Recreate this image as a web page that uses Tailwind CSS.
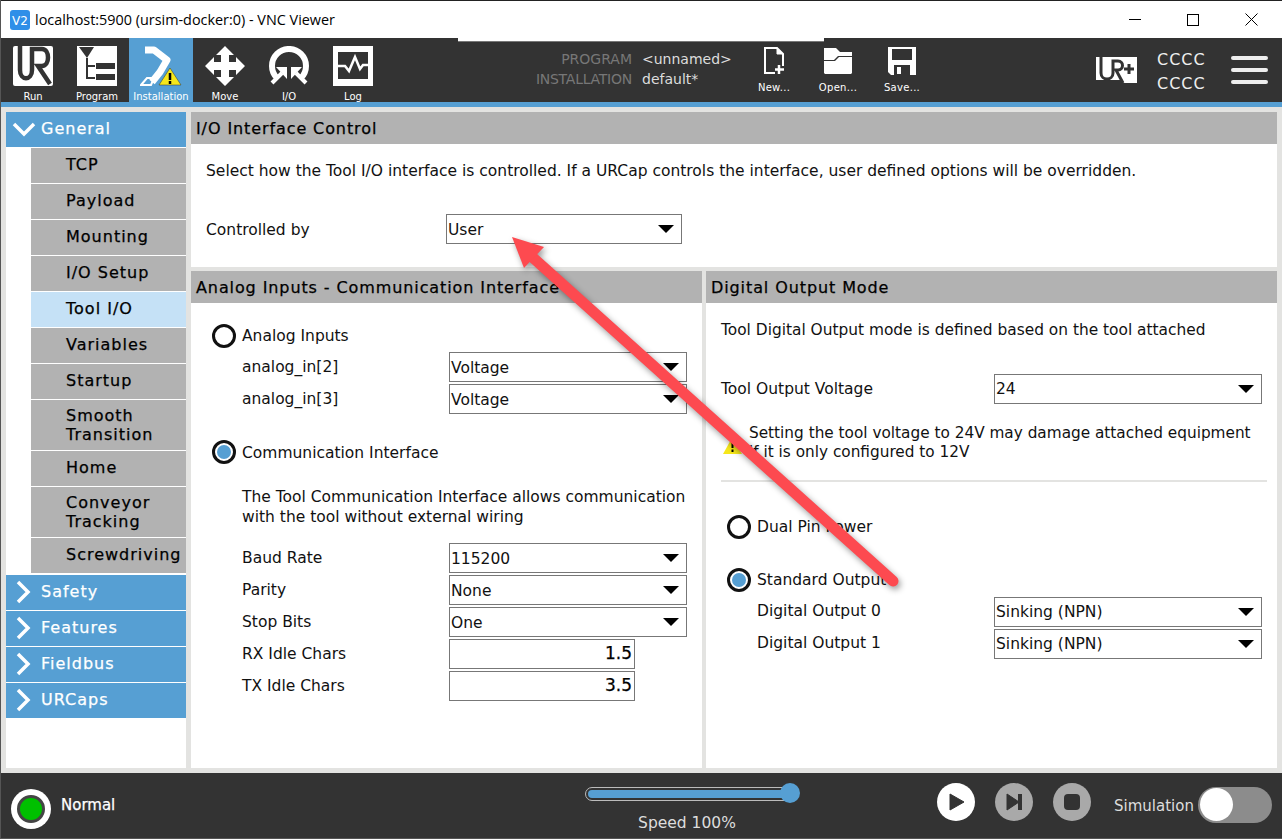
<!DOCTYPE html>
<html lang="en">

<head>
    <meta charset="UTF-8">
    <script src="https://cdn.jsdelivr.net/npm/@tailwindcss/browser@4"></script>
    <title>VNC Viewer</title>
</head>

<body class="font-['DejaVu_Sans',sans-serif] overflow-hidden">
    <div class="relative w-[1282px] h-[839px] bg-[#555] pl-px pb-px flex flex-col">

        <!-- window title -->
        <div class="h-[38px] shrink-0 bg-white border-t border-[#222] flex items-center pl-[9px] font-['Open_Sans',sans-serif] text-[14.4px] text-black relative">
            <svg class="w-[20px] h-[20px] mr-[5px]" viewBox="0 0 20 20"><rect width="20" height="20" rx="3" fill="#2f8fe8"/><text x="2" y="15" font-size="12" fill="#fff" font-family="DejaVu Sans">V2</text></svg>
            <span>localhost:5900 (ursim-docker:0) - VNC Viewer</span>
            <div class="ml-auto mr-[1px] flex items-center h-full">
                <div class="w-[58px] flex justify-center"><div class="w-[12px] h-px bg-black"></div></div>
                <div class="w-[58px] flex justify-center"><div class="w-[12px] h-[12px] border border-black"></div></div>
                <div class="w-[59px] flex justify-center">
                    <svg class="w-[13px] h-[13px]" viewBox="0 0 13 13"><path d="M0.5 0.5L12.5 12.5M12.5 0.5L0.5 12.5" stroke="#000" fill="none"/></svg>
                </div>
            </div>
            <div class="absolute left-[457px] top-[37px] w-[366px] h-[4px] bg-white border-b border-[#777]"></div>
        </div>

        <!-- toolbar -->
        <div class="h-[64px] shrink-0 bg-[#333] flex text-white">
            <div class="w-[64px] flex flex-col items-center pt-[8px]">
                <svg class="w-[40px] h-[40px] shrink-0" viewBox="0 0 40 40"><rect width="40" height="40" rx="2" fill="#fff"/><path d="M7 0V24C7 35 19 35 19 24V3H29C37 3 37 20 29 20H25L37 38" fill="none" stroke="#333" stroke-width="4.5"/></svg>
                <span class="text-[10px] mt-[3px]">Run</span>
            </div>
            <div class="w-[64px] flex flex-col items-center pt-[8px]">
                <svg class="w-[40px] h-[40px] shrink-0" viewBox="0 0 40 40"><rect width="40" height="40" fill="#fff"/><path d="M2 1H17L10 12Z" fill="#333"/><path d="M10 12V32H18M10 20H18" stroke="#333" stroke-width="2" fill="none"/><rect x="19" y="17" width="19" height="6" fill="#333"/><rect x="19" y="28" width="19" height="6" fill="#333"/></svg>
                <span class="text-[10px] mt-[3px]">Program</span>
            </div>
            <div class="w-[64px] bg-[#569fd3] flex flex-col items-center pt-[8px]">
                <svg class="w-[42px] h-[40px] shrink-0" viewBox="0 0 42 40"><path d="M5 4H14L27 14L20 26L12 36" fill="none" stroke="#fff" stroke-width="7" stroke-linejoin="round"/><path d="M1 39L7 32H14L11 39Z" fill="none" stroke="#fff" stroke-width="2"/><path d="M19 39L30 22L41 39Z" fill="#f6e71b" stroke="#333" stroke-width="0.5"/><path d="M30 27V34M30 35V38" stroke="#000" stroke-width="2.5"/></svg>
                <span class="text-[10px] mt-[3px] whitespace-nowrap">Installation</span>
            </div>
            <div class="w-[64px] flex flex-col items-center pt-[8px]">
                <svg class="w-[40px] h-[40px] shrink-0" viewBox="0 0 40 40"><path d="M20 0L29 9H24V16H31V11L40 20L31 29V24H24V31H29L20 40L11 31H16V24H9V29L0 20L9 11V16H16V9H11Z" fill="#fff"/></svg>
                <span class="text-[10px] mt-[3px]">Move</span>
            </div>
            <div class="w-[64px] flex flex-col items-center pt-[8px]">
                <svg class="w-[40px] h-[40px] shrink-0" viewBox="0 0 40 40"><path d="M8 32A17 17 0 1 1 32 32" fill="none" stroke="#fff" stroke-width="6"/><path d="M3 37L13 27" stroke="#fff" stroke-width="4"/><path d="M18 21V33L7 21Z" fill="#fff"/><path d="M37 37L27 27" stroke="#fff" stroke-width="4"/><path d="M22 21V33L33 21Z" fill="#fff"/></svg>
                <span class="text-[10px] mt-[3px]">I/O</span>
            </div>
            <div class="w-[64px] flex flex-col items-center pt-[8px]">
                <svg class="w-[40px] h-[40px] shrink-0" viewBox="0 0 40 40"><rect width="40" height="40" fill="#fff"/><rect x="5" y="6" width="30" height="27" fill="#333"/><path d="M5 20H12L16 25L22 11L27 23L30 19H35" stroke="#fff" stroke-width="2.5" fill="none"/></svg>
                <span class="text-[10px] mt-[3px]">Log</span>
            </div>

            <div class="w-[247px] flex flex-col items-end pt-[11px] text-[14px] leading-[20px] text-[#777]">
                <span>PROGRAM</span>
                <span class="tracking-[-0.25px]">INSTALLATION</span>
            </div>
            <div class="w-[110px] flex flex-col pl-[10px] pt-[11px] text-[14px] leading-[20px] text-[#ddd]">
                <span>&lt;unnamed&gt;</span>
                <span>default*</span>
            </div>
            <div class="w-[64px] flex flex-col items-center pt-[9px]">
                <svg class="w-[20px] h-[28px] shrink-0" viewBox="0 0 20 28"><path d="M1 1H13L19 7V26H1Z" fill="none" stroke="#fff" stroke-width="2"/><path d="M13 1V7H19" fill="#fff" stroke="#fff"/><rect x="11" y="19" width="9" height="9" fill="#333"/><path d="M15 18V27M11 22.5H20" stroke="#fff" stroke-width="2.5"/></svg>
                <span class="text-[10px] tracking-[0.3px] mt-[5px]">New...</span>
            </div>
            <div class="w-[64px] flex flex-col items-center pt-[9px]">
                <svg class="w-[28px] h-[28px] shrink-0" viewBox="0 0 28 28"><path d="M0 1H12L16 5H28V9H14L10 13H0Z" fill="#fff"/><path d="M0 14H11L15 10H28V26L27 27H1L0 26Z" fill="#fff"/></svg>
                <span class="text-[10px] tracking-[0.3px] mt-[5px]">Open...</span>
            </div>
            <div class="w-[64px] flex flex-col items-center pt-[9px]">
                <svg class="w-[28px] h-[28px] shrink-0" viewBox="0 0 28 28"><path d="M0 0H28V28H3L0 25Z" fill="#fff"/><rect x="4" y="2" width="20" height="11" fill="#333"/><rect x="6" y="18" width="16" height="10" fill="#333"/><rect x="9" y="20" width="4" height="7" fill="#fff"/></svg>
                <span class="text-[10px] tracking-[0.3px] mt-[5px]">Save...</span>
            </div>

            <div class="ml-auto flex">
                <svg class="w-[41px] h-[28px] mt-[18px] mr-[20px]" viewBox="0 0 41 28"><path d="M0 1H41V27H28L24 24H0Z" fill="#fff"/><path d="M5 1V17C5 25 17 25 17 17V5H22C28 5 28 14 22 14H20L27 27" fill="none" stroke="#333" stroke-width="3"/><path d="M33 8V18M28 13H38" stroke="#333" stroke-width="3"/></svg>
                <div class="w-[52px] flex flex-col pt-[10px] text-[16px] leading-[24px] text-[#eee] tracking-[1px]">
                    <span>CCCC</span>
                    <span>CCCC</span>
                </div>
                <div class="w-[37px] ml-[22px] mr-[14px] mt-[18px] flex flex-col gap-[8px]">
                    <div class="h-[4px] bg-[#eee] rounded-sm"></div>
                    <div class="h-[4px] bg-[#eee] rounded-sm"></div>
                    <div class="h-[4px] bg-[#eee] rounded-sm"></div>
                </div>
            </div>
        </div>
        <div class="h-[5px] shrink-0 bg-[#569fd3]"></div>

        <!-- main -->
        <div class="h-[666px] shrink-0 bg-[#e3e3e1] flex pl-[5px] pr-[5px] pt-[5px] pb-[5px] gap-[5px]">

            <!-- sidebar -->
            <div class="w-[180px] bg-white flex flex-col text-[16px] text-black tracking-[1px] [-webkit-text-stroke:0.25px]">
                <div class="h-[35px] bg-[#569fd3] text-white flex items-center pb-[2px] mb-px">
                    <svg class="w-[24px] h-[16px] ml-[6px] mr-[5px]" viewBox="0 0 24 16"><path d="M2 3L12 13L22 3" stroke="#fff" stroke-width="3.5" fill="none"/></svg>
                    <span>General</span>
                </div>
                <div class="pl-[25px] flex flex-col gap-px">
                    <div class="h-[35px] bg-[#b2b2b2] flex items-center pl-[35px] pb-[2px]">TCP</div>
                    <div class="h-[35px] bg-[#b2b2b2] flex items-center pl-[35px] pb-[2px]">Payload</div>
                    <div class="h-[35px] bg-[#b2b2b2] flex items-center pl-[35px] pb-[2px]">Mounting</div>
                    <div class="h-[35px] bg-[#b2b2b2] flex items-center pl-[35px] pb-[2px]">I/O Setup</div>
                    <div class="h-[35px] bg-[#c5e1f6] flex items-center pl-[35px] pb-[2px]">Tool I/O</div>
                    <div class="h-[35px] bg-[#b2b2b2] flex items-center pl-[35px] pb-[2px]">Variables</div>
                    <div class="h-[35px] bg-[#b2b2b2] flex items-center pl-[35px] pb-[2px]">Startup</div>
                    <div class="h-[50px] bg-[#b2b2b2] flex items-center pl-[35px] leading-[19px]">Smooth<br>Transition</div>
                    <div class="h-[35px] bg-[#b2b2b2] flex items-center pl-[35px] pb-[2px]">Home</div>
                    <div class="h-[50px] bg-[#b2b2b2] flex items-center pl-[35px] leading-[19px]">Conveyor<br>Tracking</div>
                    <div class="h-[35px] bg-[#b2b2b2] flex items-center pl-[35px] pb-[2px]">Screwdriving</div>
                </div>
                <div class="flex flex-col gap-px mt-[2px] text-white">
                    <div class="h-[35px] bg-[#569fd3] flex items-center pb-[2px]"><svg class="w-[16px] h-[24px] ml-[9px] mr-[10px]" viewBox="0 0 16 24"><path d="M3 2L13 12L3 22" stroke="#fff" stroke-width="3.5" fill="none"/></svg>Safety</div>
                    <div class="h-[35px] bg-[#569fd3] flex items-center pb-[2px]"><svg class="w-[16px] h-[24px] ml-[9px] mr-[10px]" viewBox="0 0 16 24"><path d="M3 2L13 12L3 22" stroke="#fff" stroke-width="3.5" fill="none"/></svg>Features</div>
                    <div class="h-[35px] bg-[#569fd3] flex items-center pb-[2px]"><svg class="w-[16px] h-[24px] ml-[9px] mr-[10px]" viewBox="0 0 16 24"><path d="M3 2L13 12L3 22" stroke="#fff" stroke-width="3.5" fill="none"/></svg>Fieldbus</div>
                    <div class="h-[35px] bg-[#569fd3] flex items-center pb-[2px]"><svg class="w-[16px] h-[24px] ml-[9px] mr-[10px]" viewBox="0 0 16 24"><path d="M3 2L13 12L3 22" stroke="#fff" stroke-width="3.5" fill="none"/></svg>URCaps</div>
                </div>
            </div>

            <!-- content -->
            <div class="flex-1 flex flex-col gap-[4px] text-[15.5px] text-[#111]">
                <div class="h-[155px] bg-white shrink-0">
                    <div class="h-[32px] bg-[#b2b2b2] pl-[5px] pt-[1px] flex items-center text-[16px] tracking-[0.9px] text-black [-webkit-text-stroke:0.25px]">I/O Interface Control</div>
                    <p class="pl-[15px] pt-[17px] leading-[20px]">Select how the Tool I/O interface is controlled. If a URCap controls the interface, user defined options will be overridden.</p>
                    <div class="flex items-center mt-[33px] pl-[15px]">
                        <span class="w-[240px] pt-[4px]">Controlled by</span>
                        <div class="w-[236px] h-[30px] border border-[#777] flex items-center pl-[1px] pt-[4px]">User<div class="ml-auto mr-[7px] mb-[4px] w-0 h-0 border-x-[8px] border-x-transparent border-t-[8px] border-t-black"></div></div>
                    </div>
                </div>

                <div class="flex-1 flex gap-[4px]">
                    <div class="w-[511px] bg-white">
                        <div class="h-[32px] bg-[#b2b2b2] pl-[5px] pt-[1px] flex items-center text-[16px] tracking-[0.9px] text-black [-webkit-text-stroke:0.25px]">Analog Inputs - Communication Interface</div>
                        <div class="pl-[21px] pt-[21px]">
                            <div class="h-[24px] flex items-center gap-[6px]">
                                <div class="w-[24px] h-[24px] rounded-full border-[3px] border-[#111] bg-white"></div><span class="pt-[2px]">Analog Inputs</span>
                            </div>
                            <div class="pl-[30px] mt-[4px] flex flex-col gap-[2px]">
                                <div class="h-[30px] flex items-center"><span class="w-[207px] pt-[2px]">analog_in[2]</span><div class="w-[238px] h-[30px] border border-[#777] flex items-center pl-[1px] pt-[4px]">Voltage<div class="ml-auto mr-[7px] mb-[4px] w-0 h-0 border-x-[8px] border-x-transparent border-t-[8px] border-t-black"></div></div></div>
                                <div class="h-[30px] flex items-center"><span class="w-[207px] pt-[2px]">analog_in[3]</span><div class="w-[238px] h-[30px] border border-[#777] flex items-center pl-[1px] pt-[4px]">Voltage<div class="ml-auto mr-[7px] mb-[4px] w-0 h-0 border-x-[8px] border-x-transparent border-t-[8px] border-t-black"></div></div></div>
                            </div>
                            <div class="h-[24px] flex items-center gap-[6px] mt-[26px]">
                                <div class="w-[24px] h-[24px] rounded-full border-[3px] border-[#111] bg-white flex items-center justify-center"><div class="w-[14px] h-[14px] rounded-full bg-[#569fd3]"></div></div><span class="pt-[4px]">Communication Interface</span>
                            </div>
                            <p class="pl-[30px] mt-[23px] leading-[20px]">The Tool Communication Interface allows communication<br>with the tool without external wiring</p>
                            <div class="pl-[30px] mt-[16px] flex flex-col gap-[2px]">
                                <div class="h-[30px] flex items-center"><span class="w-[207px] pt-[2px]">Baud Rate</span><div class="w-[238px] h-[30px] border border-[#777] flex items-center pl-[1px] pt-[4px]">115200<div class="ml-auto mr-[7px] mb-[4px] w-0 h-0 border-x-[8px] border-x-transparent border-t-[8px] border-t-black"></div></div></div>
                                <div class="h-[30px] flex items-center"><span class="w-[207px] pt-[2px]">Parity</span><div class="w-[238px] h-[30px] border border-[#777] flex items-center pl-[1px] pt-[4px]">None<div class="ml-auto mr-[7px] mb-[4px] w-0 h-0 border-x-[8px] border-x-transparent border-t-[8px] border-t-black"></div></div></div>
                                <div class="h-[30px] flex items-center"><span class="w-[207px] pt-[2px]">Stop Bits</span><div class="w-[238px] h-[30px] border border-[#777] flex items-center pl-[1px] pt-[4px]">One<div class="ml-auto mr-[7px] mb-[4px] w-0 h-0 border-x-[8px] border-x-transparent border-t-[8px] border-t-black"></div></div></div>
                                <div class="h-[30px] flex items-center"><span class="w-[207px] pt-[2px]">RX Idle Chars</span><div class="w-[186px] h-[30px] border border-[#777] flex items-center justify-end pr-[2px] text-[17px] text-black [-webkit-text-stroke:0.25px]">1.5</div></div>
                                <div class="h-[30px] flex items-center"><span class="w-[207px] pt-[2px]">TX Idle Chars</span><div class="w-[186px] h-[30px] border border-[#777] flex items-center justify-end pr-[2px] text-[17px] text-black [-webkit-text-stroke:0.25px]">3.5</div></div>
                            </div>
                        </div>
                    </div>

                    <div class="flex-1 bg-white">
                        <div class="h-[32px] bg-[#b2b2b2] pl-[5px] pt-[1px] flex items-center text-[16px] tracking-[0.9px] text-black [-webkit-text-stroke:0.25px]">Digital Output Mode</div>
                        <div class="pl-[15px] pr-[10px]">
                            <p class="pt-[17px] leading-[20px] text-[15.4px]">Tool Digital Output mode is defined based on the tool attached</p>
                            <div class="h-[30px] flex items-center mt-[34px]"><span class="w-[273px] pt-[2px]">Tool Output Voltage</span><div class="w-[268px] h-[30px] border border-[#777] flex items-center pl-[1px] pt-[2px]">24<div class="ml-auto mr-[7px] mb-[2px] w-0 h-0 border-x-[8px] border-x-transparent border-t-[8px] border-t-black"></div></div></div>
                            <div class="flex items-center mt-[20px] leading-[19px]">
                                <svg class="w-[19px] h-[17px] shrink-0 ml-[2px] mr-[7px] mt-[5px]" viewBox="0 0 19 17"><path d="M9.5 0L19 17H0Z" fill="#f6e71b"/><path d="M9.5 5V11M9.5 12.5V15" stroke="#000" stroke-width="2"/></svg>
                                <p class="whitespace-nowrap text-[15.3px]">Setting the tool voltage to 24V may damage attached equipment<br>if it is only configured to 12V</p>
                            </div>
                            <div class="h-[2px] bg-[#e3e3e1] mt-[18px]"></div>
                            <div class="h-[24px] flex items-center gap-[6px] mt-[33px] pl-[6px]">
                                <div class="w-[24px] h-[24px] rounded-full border-[3px] border-[#111] bg-white"></div><span class="pt-[2px]">Dual Pin Power</span>
                            </div>
                            <div class="h-[24px] flex items-center gap-[6px] mt-[29px] pl-[6px]">
                                <div class="w-[24px] h-[24px] rounded-full border-[3px] border-[#111] bg-white flex items-center justify-center"><div class="w-[14px] h-[14px] rounded-full bg-[#569fd3]"></div></div><span class="pt-[2px]">Standard Output</span>
                            </div>
                            <div class="pl-[36px] mt-[5px] flex flex-col gap-[2px]">
                                <div class="h-[30px] flex items-center"><span class="w-[237px]">Digital Output 0</span><div class="w-[268px] h-[30px] border border-[#777] flex items-center pl-[1px] pt-[2px]">Sinking (NPN)<div class="ml-auto mr-[7px] mb-[2px] w-0 h-0 border-x-[8px] border-x-transparent border-t-[8px] border-t-black"></div></div></div>
                                <div class="h-[30px] flex items-center"><span class="w-[237px]">Digital Output 1</span><div class="w-[268px] h-[30px] border border-[#777] flex items-center pl-[1px] pt-[2px]">Sinking (NPN)<div class="ml-auto mr-[7px] mb-[2px] w-0 h-0 border-x-[8px] border-x-transparent border-t-[8px] border-t-black"></div></div></div>
                            </div>
                        </div>
                    </div>
                </div>
            </div>
        </div>

        <!-- footer -->
        <div class="h-[65px] shrink-0 bg-[#333] flex text-white">
            <div class="w-[40px] h-[40px] rounded-full bg-white ml-[10px] mt-[16px] flex items-center justify-center">
                <div class="w-[28px] h-[28px] rounded-full bg-[#00c000] border-[3px] border-[#444]"></div>
            </div>
            <span class="w-[55px] ml-[10px] mt-[22px] text-[15px] leading-[20px] [-webkit-text-stroke:0.25px]">Normal</span>
            <div class="w-[240px] ml-[453px] flex flex-col items-center pt-[14px]">
                <div class="relative w-[206px] h-[14px] ml-[-3px] border border-[#bbb] rounded-full p-[2px]">
                    <div class="h-full bg-[#569fd3] rounded-full"></div>
                    <div class="absolute right-[-10px] top-[-5px] w-[20px] h-[20px] rounded-full bg-[#569fd3]"></div>
                </div>
                <span class="text-[15.5px] mt-[12px] text-[#ddd] mr-[4px] leading-[20px]">Speed 100%</span>
            </div>
            <div class="flex gap-[20px] mt-[10px] ml-[128px]">
                <div class="w-[38px] h-[38px] rounded-full bg-white flex items-center justify-center"><svg class="w-[16px] h-[18px] ml-[2px]" viewBox="0 0 16 18"><path d="M1 1L15 9L1 17Z" fill="#333" stroke="#333" stroke-linejoin="round"/></svg></div>
                <div class="w-[38px] h-[38px] rounded-full bg-[#a9a9a9] flex items-center justify-center"><svg class="w-[17px] h-[18px]" viewBox="0 0 17 18"><path d="M1 1L13 9L1 17Z" fill="#333" stroke="#333" stroke-linejoin="round"/><rect x="12" y="1" width="4" height="16" fill="#333"/></svg></div>
                <div class="w-[38px] h-[38px] rounded-full bg-[#a9a9a9] flex items-center justify-center"><div class="w-[16px] h-[16px] rounded-sm bg-[#333]"></div></div>
            </div>
            <span class="ml-[23px] mt-[23px] text-[15px] leading-[20px] text-[#ddd]">Simulation</span>
            <div class="relative w-[74px] h-[36px] rounded-full bg-[#8c8c8c] ml-[4px] mt-[14px]">
                <div class="absolute left-[2px] top-[1px] w-[33px] h-[33px] rounded-full bg-white"></div>
            </div>
        </div>

        <!-- arrow annotation -->
        <svg class="absolute left-0 top-0 pointer-events-none drop-shadow-[2px_3px_3px_rgba(0,0,0,0.4)]" width="1282" height="839" viewBox="0 0 1282 839">
            <path d="M893 581L530 255" stroke="#fd4a50" stroke-width="11" stroke-linecap="round"/>
            <path d="M512 237L544 247L524 268Z" fill="#fd4a50"/>
        </svg>
    </div>
</body>

</html>
